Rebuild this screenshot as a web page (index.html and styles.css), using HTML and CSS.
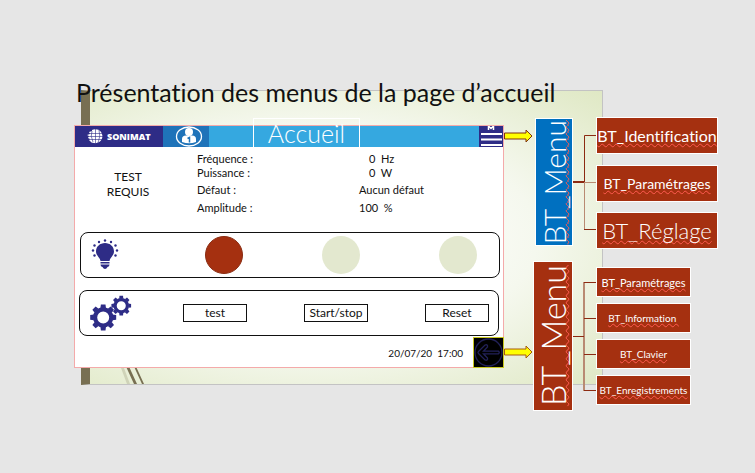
FILE: index.html
```html
<!DOCTYPE html>
<html lang="fr">
<head>
<meta charset="utf-8">
<title>Présentation des menus</title>
<link rel="stylesheet" href="styles.css">
</head>
<body>
<div class="slide" aria-hidden="true">
  <svg class="slide-lines" width="40" height="24" viewBox="0 0 40 24"><path d="M4 0l9 24h3l-9-24z" fill="#cfd3b8"/><path d="M9 0l11 24h3l-11-24z M17 0l11 24h2l-11-24z" fill="#786f52"/></svg>
</div>
<h1 class="title">Présentation des menus de la page d’accueil</h1>
<main class="board">
  <section class="device">
    <header class="bar">
      <div class="brand">
        <svg width="16" height="15" viewBox="0 0 16 15"><path d="M5 1a7 7 0 1 1 2 13q-3 0-4-2l-1-1 1-1-2-1 1-2-2-1 3-1-1-2 3-1z" fill="#fff"/><path d="M2 4.500h13M1 7.500h15M2 10.500h13M5 2q-2 5 1 11M8.500 0v15M12 1q2 6-1 13" fill="none" stroke="#2e2c86" stroke-width=".6"/></svg>
        <span>SONIMAT</span>
      </div>
      <button class="user" aria-label="Utilisateur 1"><svg width="28" height="21" viewBox="0 0 28 21"><ellipse cx="14" cy="10.500" rx="12.500" ry="9.500" fill="none" stroke="#fff" stroke-width="1.300"/><circle cx="14" cy="6" r="4" fill="#fff"/><path d="M7 16v-3q0-3.500 4-3.500h6q4 0 4 3.500v3q-7 2.500-14 0z" fill="#fff"/><path d="M12.500 12.500l2-1v5" fill="none" stroke="#1f73b9" stroke-width="1.500"/></svg></button>
      <h2 class="page">Accueil</h2>
      <button class="menu" aria-label="Menu"><svg width="23" height="21" viewBox="0 0 23 21"><path d="M9.500 4V0L12 2.500 14.500 0v4" fill="none" stroke="#fff" stroke-width="1.500"/><path d="M2 8h21M2 13.500h21M2 19h21" stroke="#fff" stroke-width="2"/></svg></button>
    </header>
    <div class="status">
      <p class="test">TEST<br>REQUIS</p>
      <dl class="values">
        <dt>Fréquence :</dt><dd class="num">0&nbsp; Hz</dd>
        <dt>Puissance :</dt><dd class="num">0&nbsp; W</dd>
        <dt>Défaut :</dt><dd>Aucun défaut</dd>
        <dt>Amplitude :</dt><dd>100&nbsp; %</dd>
      </dl>
    </div>
    <div class="panel panel-lamps">
      <svg class="icon" width="28" height="32" viewBox="0 0 28 32" fill="#2e2c86"><path d="M14 4c5 0 9 3.500 9 8.500 0 4-4 6-4.500 9.500h-9C9 18.500 5 16.500 5 12.500 5 7.500 9 4 14 4z"/><path d="M9.500 23h9v1.500h-9zM9.500 25.500h9q0 2-2 2.500-1 2-2.500 2t-2.500-2q-2-.5-2-2.500z"/><circle cx="14" cy="1.500" r="1.200"/><circle cx="8" cy="3" r="1.200"/><circle cx="20" cy="3" r="1.200"/><circle cx="3.500" cy="6.500" r="1.200"/><circle cx="24.500" cy="6.500" r="1.200"/><circle cx="2" cy="11.500" r="1.200"/><circle cx="26" cy="11.500" r="1.200"/><circle cx="3.500" cy="16.500" r="1.200"/><circle cx="24.500" cy="16.500" r="1.200"/></svg>
      <span class="lamp lamp-on"></span><span class="lamp"></span><span class="lamp"></span>
    </div>
    <div class="panel panel-actions">
      <svg class="icon" width="43" height="38" viewBox="0 0 43 38">
        <defs><g id="gear"><circle r="8.700" fill="none" stroke="#2e2c86" stroke-width="4.500"/><g fill="#2e2c86"><path id="tooth" d="M-3-10l.5-4h5l.5 4z"/><use href="#tooth" transform="rotate(45)"/><use href="#tooth" transform="rotate(90)"/><use href="#tooth" transform="rotate(135)"/><use href="#tooth" transform="rotate(180)"/><use href="#tooth" transform="rotate(225)"/><use href="#tooth" transform="rotate(270)"/><use href="#tooth" transform="rotate(315)"/></g></g></defs>
        <use href="#gear" transform="translate(13.500 23.500) scale(.95)"/><use href="#gear" transform="translate(32 11.500) scale(.72)"/>
      </svg>
      <button class="action">test</button><button class="action">Start/stop</button><button class="action">Reset</button>
    </div>
    <footer class="foot">
      <time datetime="2020-07-20T17:00">20/07/20&nbsp; 17:00</time>
      <button class="back" aria-label="Retour"><svg width="29" height="29" viewBox="0 0 29 29" fill="none" stroke="#222158" stroke-width="1.300"><circle cx="14.500" cy="14.500" r="13.500"/><path d="M4.500 13.500L11 7q3-1 2.500 2l-4 4.200h15q1.500 1.300 0 2.600h-15l4 4.200q.5 3-2.500 2l-6.500-6.500q-1-1 0-2z"/></svg></button>
    </footer>
  </section>
  <div class="trees">
    <section class="tree">
      <svg class="arrow" width="29" height="14" viewBox="0 0 29 14"><path d="M.5 4H22V1l6 6-6 6v-3H.5z" fill="#ff0" stroke="#7f3010"/></svg>
      <h3 class="root root-blue"><span>BT_Menu</span></h3>
      <svg class="links" viewBox="0 0 23 132" preserveAspectRatio="none"><path d="M0 65h12" stroke="#8c2a12" stroke-width="2"/><path d="M11.500 65v48M12 65.500h11" fill="none" stroke="#b98a72"/><path d="M23 18.500H11.500V65M11 112.500h12" fill="none" stroke="#8c2a12"/></svg>
      <div class="nodes"><a class="node mid" href="#identification"><span>BT_Identification</span></a><a class="node small" href="#parametrages"><span>BT_Paramétrages</span></a><a class="node large" href="#reglage"><span>BT_Réglage</span></a></div>
    </section>
    <section class="tree tree-back">
      <svg class="arrow" width="29" height="14" viewBox="0 0 29 14"><path d="M.5 4H22V1l6 6-6 6v-3H.5z" fill="#ff0" stroke="#a65a10"/></svg>
      <h3 class="root"><span>BT_Menu</span></h3>
      <svg class="links" viewBox="0 0 23 150" preserveAspectRatio="none"><path d="M11 21v109" stroke="#b98a72" stroke-width="2"/><path d="M0 75.500h11M11 21.500h12M11 57.500h12M11 93.500h12M11 129.500h12" stroke="#8c2a12"/></svg>
      <div class="nodes"><a class="node wide" href="#parametrages-2"><span>BT_Paramétrages</span></a><a class="node" href="#information"><span>BT_Information&nbsp;</span></a><a class="node" href="#clavier"><span>BT_Clavier</span></a><a class="node" href="#enregistrements"><span>BT_Enregistrements</span></a></div>
    </section>
  </div>
</main>
</body>
</html>
```
FILE: styles.css
```css
* { box-sizing: border-box; }
body { margin: 0; position: relative; background: #e6e6e6; color: #111; font-family: "Century Gothic", Lato, sans-serif; font-variant-ligatures: none; }
h1, h2, h3, p, dl, dd { margin: 0; font-weight: 400; }
button { font: inherit; color: inherit; padding: 0; border: 0; background: none; }
svg { display: block; }

.slide { position: absolute; z-index: -1; top: 90px; left: 81px; right: 152px; height: 295px; border: 1px solid #c3c3c3; border-left: 9px solid #786f52; background: radial-gradient(ellipse at 43% 50%, #fff 20%, #f5f8ee 55%, #dfe8c4 100%); display: flex; align-items: flex-end; padding-left: 24px; }
.title { padding: 76px 0 0 76px; font-size: 25px; line-height: 32px; white-space: nowrap; }
.board { display: grid; grid-template-columns: minmax(0, 430fr) minmax(0, 214fr); align-items: start; padding: 9px 37px 0 74px; }

.device { margin-top: 8px; background: #fff; border: 1px solid #f4aaaa; }
.bar { display: flex; align-items: flex-end; height: 21px; background: #35a8e0; }
.brand { display: flex; align-items: center; gap: 4px; width: 88px; height: 21px; padding-left: 12px; background: #2e2c86; color: #fff; font: 800 9px/21px "Open Sans", sans-serif; }
.user { display: flex; justify-content: center; width: 46px; height: 21px; padding-left: 6px; background: #1f73b9; }
.page { width: 107px; height: 29px; margin: 0 auto 0 44px; border: 1px solid #fff; border-bottom: 0; color: #fff; font-weight: 300; font-size: 25px; line-height: 29px; text-align: center; }
.menu { width: 24px; height: 21px; background: #2e2c86; }
.status { display: grid; grid-template-columns: 106px 1fr; height: 85px; }
.test { padding-top: 22px; font-size: 12px; line-height: 15px; text-align: center; }
.values { display: grid; grid-template-columns: 162px 1fr; grid-template-rows: 14px 14px 17px 18px; padding: 5px 0 0 16px; font-size: 11px; line-height: 14px; align-items: end; align-content: start; }
.num { padding-left: 10px; }
.panel { display: flex; align-items: center; height: 46px; margin: 0 3px 12px 5px; border: 1px solid #111; border-radius: 8px; }
.icon { margin: 0 auto 0 10px; }
.panel-lamps { gap: 79px; padding-right: 22px; }
.lamp { width: 38px; height: 38px; border-radius: 50%; background: #e3e8cf; }
.lamp-on { background: #a53010; border: 1px solid #8a2c12; }
.panel-actions { justify-content: flex-end; gap: 57px; margin: 0 4px 0 4px; padding-right: 9px; }
.panel-actions .icon { margin-right: -6px; }
.action { flex: none; width: 64px; height: 18px; border: 1px solid #111; font-size: 12px; line-height: 16px; }
.foot { display: flex; justify-content: flex-end; align-items: center; gap: 10px; margin: 1px -1px -1px 0; font-size: 10px; }
.back { border: 1px solid #c9c820; background: #000; }

.tree { display: grid; grid-template-columns: 29px 40px 23px minmax(0, 1fr); height: 132px; }
.tree-back { height: 150px; margin-top: 12px; }
.arrow { margin-top: 12px; }
.tree-back .arrow { margin-top: 84px; }
.root { display: flex; align-items: center; justify-content: center; border: 1px solid #fff; background: #a53010; color: #fff; font-size: 34px; font-weight: 300; line-height: 38px; }
.root span { writing-mode: vertical-rl; transform: rotate(180deg); }
.root-blue { width: 38px; height: 128px; margin: 1px 0 0 2px; background: #0070c0; font-size: 30px; line-height: 34px; }
.node span { text-decoration: underline wavy #ff5a50 1px; text-decoration-skip-ink: none; text-underline-offset: 1px; }
.root span { text-decoration: underline wavy #ff5a50 1px; text-decoration-skip-ink: none; text-underline-offset: -5px; }
.links { width: 100%; height: 100%; }
.nodes { display: flex; flex-direction: column; justify-content: space-between; }
.node { display: flex; align-items: center; justify-content: center; height: 37px; border: 1px solid #fff; background: #a53010; color: #fff; text-decoration: none; white-space: nowrap; font-size: 10px; }
.wide { font-size: 11px; }
.mid { font-size: 16px; }
.small { font-size: 14px; }
.large { font-size: 22px; font-weight: 300; }
.tree-back .nodes { padding: 6px 27px 6px 0; }
.tree-back .node { height: 30px; }
```
